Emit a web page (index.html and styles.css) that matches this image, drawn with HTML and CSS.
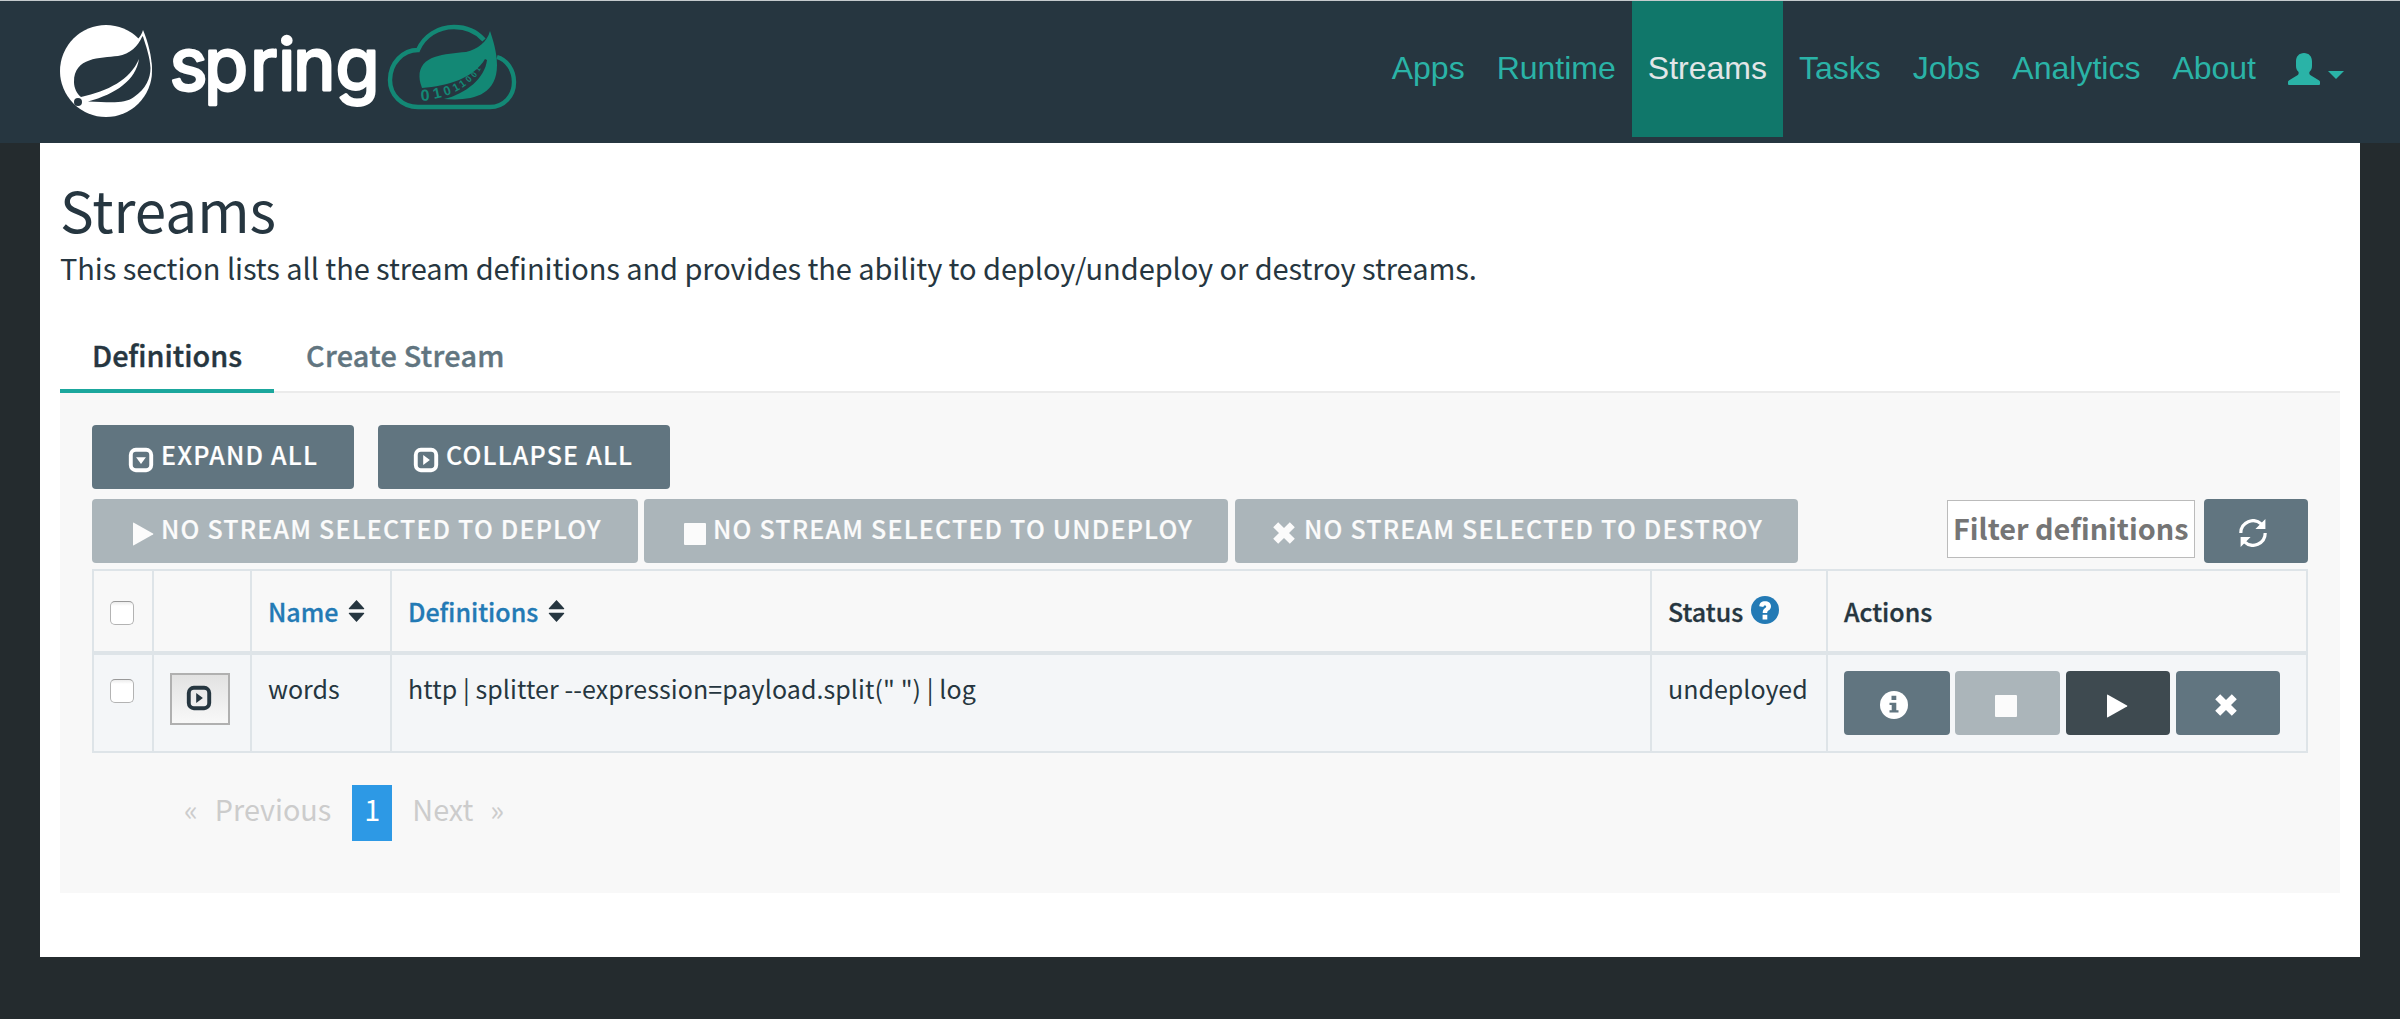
FILE: index.html
```html
<!DOCTYPE html>
<html lang="en">
<head>
<meta charset="utf-8">
<title>Streams</title>
<link rel="stylesheet" href="styles.css">
</head>
<body>
<svg class="defs" aria-hidden="true">
  <symbol id="i-play" viewBox="0 0 28 28"><path d="M5 3.2v21.600q0 1 .9.500L25 14.600q.9-.6 0-1.200L5.900 2.700Q5 2.200 5 3.200z"/></symbol>
  <symbol id="i-stop" viewBox="0 0 28 28"><rect x="3" y="3" width="22" height="22" rx="1"/></symbol>
  <symbol id="i-x" viewBox="0 0 28 28"><path d="M8.200 3.200 14 9l5.800-5.800 5 5L19 14l5.800 5.800-5 5L14 19l-5.800 5.800-5-5L9 14 3.200 8.200z"/></symbol>
  <symbol id="i-down" viewBox="0 0 28 28"><rect x="3" y="3" width="22" height="22" rx="5.500" fill="none" stroke="currentColor" stroke-width="4.200"/><path d="M8.700 11h10.600L14 18.200z"/></symbol>
  <symbol id="i-right" viewBox="0 0 28 28"><rect x="3" y="3" width="22" height="22" rx="5.500" fill="none" stroke="currentColor" stroke-width="4.200"/><path d="M11 8.700v10.600L18.200 14z"/></symbol>
  <symbol id="i-sort" viewBox="0 0 16 22"><path d="M8 0l7.600 8.200q.6 1-.6 1H1q-1.200 0-.6-1zM8 22l7.600-8.200q.6-1-.6-1H1q-1.200 0-.6 1z"/></symbol>
</svg>

<header class="topbar">
  <svg class="logo" viewBox="60 25 457 93" width="457" height="93" role="img" aria-label="Spring Cloud Data Flow">
    <circle cx="106" cy="71" r="46" fill="#fff"/>
    <path fill="#fff" d="M136 41C140 37 142 34 143 30C148 42 152 56 152 71L140 60z"/>
    <path fill="#263640" d="M142 37C138 46 130 54 118 56C100 58 74 57 74 82C74 88 77 94 81 97C108 91 130 80 139 59C136 80 116 94 88 101.500C112 102.500 124 104 134 97C146 89 150.500 78 150.500 68C150 57 146 46 142.800 36z"/>
    <circle cx="78" cy="102" r="4" fill="#263640"/>
    <text class="wordmark" x="169.500 204 250 278 293 335.500" y="89.500">spring</text>
    <path fill="none" stroke="#138875" stroke-width="4.400" d="M484 40C477 32 467 27 454 27C438 27 424 36 418 50C403 50 390 63 390 80C390 95 402 107 418 107H490C504 107 514 96 514 82C514 70 507 60 497 57"/>
    <path fill="#138875" d="M490 31C487 42 478 49 466 52C445 54 419 55 419.500 77C419.500 81 421 85 422 88C448 86 474 78 485 59L487 60C485 78 466 94 444 99C470 101 497 97 497 65C497 52 493 40 490 31z"/>
    <g class="bits">
      <text x="421" y="101" font-size="16" transform="rotate(-4 421 101)">0</text>
      <text x="434" y="99" font-size="15" transform="rotate(-12 434 99)">1</text>
      <text x="445" y="96" font-size="13" transform="rotate(-18 445 96)">0</text>
      <text x="455" y="92" font-size="11" transform="rotate(-28 455 92)">1</text>
      <text x="462" y="88" font-size="10" transform="rotate(-35 462 88)">1</text>
      <text x="469" y="83" font-size="9" transform="rotate(-45 469 83)">0</text>
      <text x="475" y="78" font-size="8" transform="rotate(-55 475 78)">0</text>
      <text x="479" y="72" font-size="7" transform="rotate(-60 479 72)">1</text>
    </g>
  </svg>
  <nav class="nav">
    <a>Apps</a><a>Runtime</a><a class="on">Streams</a><a>Tasks</a><a>Jobs</a><a>Analytics</a><a>About</a>
    <a class="user">
      <svg width="32" height="32" viewBox="0 0 32 32"><path d="M16 0c5 0 8 3.500 8 8.500v4.500c0 2.500-.8 4-2.200 5.600-.8 1-.6 2.700.4 3.300l8.600 5.300c.8.500 1.200 1 1.200 2V31q0 1-1 1H1q-1 0-1-1v-1.800c0-1 .4-1.500 1.200-2l8.600-5.300c1-.6 1.200-2.300.4-3.300C8.800 17 8 15.500 8 13V8.500C8 3.500 11 0 16 0z"/></svg>
      <svg class="caret" width="16" height="8" viewBox="0 0 16 8"><path d="M0 0h16L8 8z"/></svg>
    </a>
  </nav>
</header>

<main class="page">
  <h1 class="title"><span>Streams</span></h1>
  <p class="lead"><span>This section lists all the stream definitions and provides the ability to deploy/undeploy or destroy streams.</span></p>
  <div class="tabs"><a class="tab on"><span>Definitions</span></a><a class="tab create"><span>Create Stream</span></a></div>

  <section class="panel">
    <div class="row">
      <button class="btn w-expand"><svg width="26" height="26"><use href="#i-down"/></svg><span>EXPAND ALL</span></button>
      <button class="btn w-collapse"><svg width="26" height="26"><use href="#i-right"/></svg><span>COLLAPSE ALL</span></button>
    </div>
    <div class="row bulk">
      <button class="btn off w-deploy"><svg width="28" height="28"><use href="#i-play"/></svg><span>NO STREAM SELECTED TO DEPLOY</span></button>
      <button class="btn off w-undeploy"><svg width="28" height="28"><use href="#i-stop"/></svg><span>NO STREAM SELECTED TO UNDEPLOY</span></button>
      <button class="btn off w-destroy"><svg width="28" height="28"><use href="#i-x"/></svg><span>NO STREAM SELECTED TO DESTROY</span></button>
      <div class="filter"><span>Filter definitions</span></div>
      <button class="btn icon refresh"><svg width="28" height="28" viewBox="0 0 28 28"><g fill="none" stroke="currentColor" stroke-width="3.200"><path d="M1.800 14A12.200 12.200 0 0 1 22.500 5.200"/><path d="M26.200 14A12.200 12.200 0 0 1 5.500 22.800"/></g><path d="M26.400 0v10H16.400zM1.600 28V18h10z"/></svg></button>
    </div>

    <div class="table">
      <div class="tr head">
        <div class="td"><i class="check"></i></div>
        <div class="td"></div>
        <div class="td sort"><span>Name</span><svg width="17" height="22"><use href="#i-sort"/></svg></div>
        <div class="td sort"><span>Definitions</span><svg width="17" height="22"><use href="#i-sort"/></svg></div>
        <div class="td status"><span>Status</span><svg width="28" height="28" viewBox="0 0 28 28"><circle cx="14" cy="14" r="14" fill="#237ab5"/><path fill="#fff" d="M11.600 18.700h4.700v4.700h-4.700zM8.300 10.300C8.300 7 10.600 5.200 14 5.200c3.500 0 6 1.900 6 5 0 2.300-1.300 3.500-2.600 4.400-.8.600-1.200 1-1.200 2.300h-4.500c0-2.500.9-3.700 2.200-4.700.8-.6 1.300-1 1.300-1.700s-.5-1.100-1.300-1.100c-1 0-1.500.5-1.500 1.700z"/></svg></div>
        <div class="td"><span>Actions</span></div>
      </div>
      <div class="tr body">
        <div class="td"><i class="check"></i></div>
        <div class="td"><button class="toggle"><svg width="26" height="26"><use href="#i-right"/></svg></button></div>
        <div class="td"><span>words</span></div>
        <div class="td"><span class="dsl">http | splitter --expression=payload.split(" ") | log</span></div>
        <div class="td"><span>undeployed</span></div>
        <div class="td actions">
          <button class="btn icon a1"><svg width="28" height="28" viewBox="0 0 28 28"><circle cx="14" cy="14" r="14"/><path fill="#617580" d="M11.500 4.700h4.800v4.300h-4.800zM9.500 11.700h6.800v7.600h2.200v2.200h-9v-2.200h2.200v-5.400H9.500z"/></svg></button>
          <button class="btn icon off a2"><svg width="28" height="28"><use href="#i-stop"/></svg></button>
          <button class="btn icon dark a3"><svg width="28" height="28"><use href="#i-play"/></svg></button>
          <button class="btn icon a4"><svg width="28" height="28"><use href="#i-x"/></svg></button>
        </div>
      </div>
    </div>

    <div class="pager"><span>«</span><span class="prev">Previous</span><b>1</b><span class="next">Next</span><span>»</span></div>
  </section>
</main>
</body>
</html>
```
FILE: styles.css
```css
* { box-sizing: border-box; }
body {
  margin: 0;
  background: #242b2e;
  color: #263640;
  font-family: "Noto Sans CJK SC", "Noto Sans", sans-serif;
}
svg { display: block; flex: none; fill: currentColor; }
.defs { display: none; }
span { white-space: pre; }

.topbar {
  display: flex;
  justify-content: space-between;
  align-items: flex-start;
  height: 143px;
  border-top: 1px solid #c5cbcd;
  background: #263640;
}
.logo { margin: 24px 0 0 60px; overflow: visible; }
.wordmark { font: 400 72px Inter, sans-serif; fill: #fff; stroke: #fff; stroke-width: 2.8; stroke-linejoin: round; }
.bits { font-family: "Liberation Sans", sans-serif; font-weight: 700; fill: #138875; }
.nav { display: flex; margin-right: 40px; font: 32px/134px "Liberation Sans", sans-serif; color: #2ab3a7; }
.nav a { height: 136px; padding: 0 16px; }
.nav .on { background: #10776a; color: #e2e6e8; }
.nav .user { display: flex; align-items: flex-start; padding-top: 52px; gap: 8px; }
.caret { margin-top: 18px; }

.page { height: 814px; margin: 0 40px; padding: 0 20px; background: #fff; }
.title { margin: 0; padding-top: 30px; height: 100px; font-size: 56.6px; font-weight: 400; line-height: 70px; }
.lead { margin: 0; height: 76px; font-size: 29px; line-height: 48px; letter-spacing: -0.07px; }
.tabs { display: flex; height: 74px; border-bottom: 2px solid #ebebeb; font-size: 28.8px; font-weight: 500; line-height: 72px; -webkit-text-stroke: 0.4px; }
.tab { padding: 0 32px; height: 74px; color: #617580; }
.tab.on { width: 214px; color: #263640; border-bottom: 4px solid #1ba79d; }
.tab.create { letter-spacing: 0.3px; }

.panel { height: 500px; padding: 32px 32px 0; background: #f8f8f8; }
.row { display: flex; height: 64px; }
.bulk { margin: 10px 0 6px; }
.btn {
  display: flex; align-items: flex-start; flex: none;
  height: 64px; margin: 0; padding: 0; border: 0; border-radius: 4px;
  background: #617580; color: #fff;
  font: 500 25px/58px "Noto Sans CJK SC", sans-serif; letter-spacing: 1.2px;
  -webkit-text-stroke: 0.2px;
}
.btn.off { background: #abb5ba; color: #fbfbfb; }
.btn.dark { background: #3e4a50; }
.w-expand { width: 262px; padding-left: 36px; gap: 7px; margin-right: 24px; }
.w-collapse { width: 292px; padding-left: 35px; gap: 7px; }
.w-expand svg, .w-collapse svg { margin-top: 22px; }
.w-deploy { width: 546px; padding-left: 36px; margin-right: 6px; gap: 5px; }
.w-undeploy { width: 584px; padding-left: 37px; margin-right: 7px; gap: 4px; }
.w-destroy { width: 563px; padding-left: 35px; gap: 6px; }
.bulk .off svg { margin-top: 21px; }
.bulk .w-destroy svg { margin-top: 20px; }
.filter {
  width: 248px; height: 58px; margin: 1px 9px 0 auto; padding-left: 5px;
  border: 1px solid #bbb; background: #fff; color: #757575;
  font-size: 28.8px; font-weight: 700; line-height: 53px;
}
.btn.icon { justify-content: center; padding-top: 21px; }
.refresh { width: 104px; }
.btn.refresh { padding-top: 20px; padding-right: 7px; }

.table { border: 2px solid #dee4e8; border-left: 0; font-size: 25px; }
.tr { display: grid; grid-template-columns: 60px 98px 140px 1260px 176px 480px; }
.td { display: flex; align-items: flex-start; border-left: 2px solid #dee4e8; padding-left: 16px; }
.head { height: 84px; border-bottom: 4px solid #dee4e8; font-weight: 500; line-height: 80px; -webkit-text-stroke: 0.3px; }
.body { height: 96px; background: #f4f6f8; line-height: 66px; }
.dsl { letter-spacing: 0.08px; }
.sort { color: #237ab5; gap: 10px; }
.sort svg { margin-top: 29px; color: #263640; }
.status { gap: 8px; }
.status svg { margin-top: 25px; }
.check { width: 24px; height: 24px; margin-top: 30px; border: 1px solid #b3b3b3; border-top-color: #999; border-radius: 5px; background: linear-gradient(#ececec, #fff 4px); }
.body .check { margin-top: 24px; }
.toggle { display: flex; align-items: flex-start; width: 60px; height: 52px; margin-top: 18px; padding: 10px 0 0 14px; border: 2px solid #b0b0b0; background: linear-gradient(#e2e2e2, #f8f8f8); color: #263640; }
.body .actions { padding-top: 16px; }
.a1 { width: 106px; margin-right: 5px; }
.a2 { width: 105px; margin-right: 6px; }
.a3 { width: 104px; margin-right: 6px; }
.a4 { width: 104px; }
.btn.a1 { padding: 20px 7px 0 0; }
.btn.a2 { padding-right: 4px; }
.btn.a3 { padding-right: 5px; }
.btn.a4 { padding: 20px 5px 0 0; }

.pager { display: flex; margin: 32px 0 0 92px; font-size: 28.8px; line-height: 48px; color: #ccc; height: 56px; }
.prev { margin-left: 17px; }
.pager b { width: 40px; margin: 0 20px 0 21px; text-align: center; background: #2d99e5; color: #fff; font-weight: 400; }
.next { margin-right: 17px; }
```
